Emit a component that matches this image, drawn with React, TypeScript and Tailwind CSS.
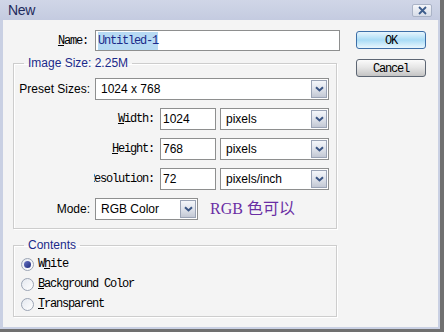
import React from "react";

const mono = "font-['Liberation_Mono',monospace] text-[12px] tracking-[-1.2px] text-black";
const sans = "font-['Liberation_Sans',Arial,sans-serif] text-[12px] text-black";

const Arrow = () => (
  <span className="flex h-[18px] w-[16px] items-center justify-center border border-[#9aa3b5] bg-gradient-to-b from-[#f4f6fa] via-[#dfe3eb] to-[#c3c8d4]">
    <svg width="9" height="6" viewBox="0 0 9 6">
      <path d="M1 1.2 L4.5 4.5 L8 1.2" stroke="#3a5584" strokeWidth="2" fill="none" />
    </svg>
  </span>
);

const Select = ({ value, className }: { value: string; className: string }) => (
  <div className={`flex h-[22px] items-center justify-between border border-[#8e8f8f] bg-white pl-[5px] pr-[1px] ${className}`}>
    <span className={sans}>{value}</span>
    <Arrow />
  </div>
);

const Field = ({ value }: { value: string }) => (
  <div className={`flex h-[22px] w-[56px] items-center border border-[#8e8f8f] bg-white pl-[2px] ${sans}`}>{value}</div>
);

const SizeRow = ({ label, value, unit, top }: { label: React.ReactNode; value: string; unit: string; top: string }) => (
  <div className={`flex items-center ${top}`}>
    <div className={`ml-[80px] flex w-[60px] justify-end overflow-hidden whitespace-nowrap ${mono}`}>{label}</div>
    <div className="ml-[6px]">
      <Field value={value} />
    </div>
    <Select value={unit} className="ml-[4px] w-[109px]" />
  </div>
);

const Radio = ({ checked, label }: { checked?: boolean; label: React.ReactNode }) => (
  <div className="flex h-[20px] items-center">
    <span className="ml-[7px] flex h-[13px] w-[13px] items-center justify-center rounded-full border border-[#9ba4b4] bg-gradient-to-br from-[#e4e8ef] to-[#ffffff]">
      {checked && <span className="h-[7px] w-[7px] rounded-full bg-gradient-to-br from-[#6a74c4] to-[#1e2a7c]" />}
    </span>
    <span className={`ml-[4px] ${mono}`}>{label}</span>
  </div>
);

const legend = "ml-[10px] px-[4px] font-['Liberation_Sans',Arial,sans-serif] text-[12px] leading-[14px] text-[#1b2a8a]";
const fieldset = "w-[324px] border border-[#cdcdcd] shadow-[1px_1px_0_#ffffff,inset_1px_1px_0_#ffffff]";

export default function App() {
  return (
    <div className="h-[332px] w-[444px] bg-[#707070] pb-[3px] pr-[4px]">
      <div className="flex h-full w-full flex-col border-b-2 border-l-[3px] border-r-2 border-[#c9d0e3] bg-[#f4f4f4]">
        <div className="-ml-[3px] -mr-[2px] flex h-[20px] shrink-0 items-center justify-between bg-gradient-to-b from-[#d0d6e7] to-[#c4cbe0] pl-[8px] pr-[8px]">
          <span className="font-['Liberation_Sans',Arial,sans-serif] text-[14px] tracking-[-0.3px] text-[#1f2a5c]">New</span>
          <span className="flex h-[13px] w-[20px] items-center justify-center rounded-[2px] border border-[#aab3c6] bg-gradient-to-b from-[#f4f6fa] to-[#d8dde8]">
            <svg width="9" height="9" viewBox="0 0 9 9">
              <path d="M1 1 L8 8 M8 1 L1 8" stroke="#3d5d8c" strokeWidth="1.8" />
            </svg>
          </span>
        </div>

        <div className="flex pl-[10px] pt-[10px]">
          <div className="flex w-[327px] flex-col">
            <div className="flex items-center">
              <div className={`w-[75px] text-right ${mono}`}>
                <span className="underline">N</span>ame:
              </div>
              <div className="ml-[7px] flex h-[21px] w-[245px] items-center border border-[#8e8f8f] bg-white pl-[2px]">
                <span className={`bg-[#b7daf3] ${mono}`} style={{ color: "#1b2a8a" }}>Untitled-1</span>
              </div>
            </div>

            <fieldset className={`mt-[5px] pb-[7px] ${fieldset}`}>
              <legend className={legend}>Image Size: 2.25M</legend>
              <div className="flex items-center pt-[8px]">
                <div className={`w-[76px] text-right ${sans}`}>Preset Sizes:</div>
                <Select value="1024 x 768" className="ml-[5px] w-[234px]" />
              </div>
              <SizeRow
                top="mt-[8px]"
                label={<span><span className="underline">W</span>idth:</span>}
                value="1024"
                unit="pixels"
              />
              <SizeRow
                top="mt-[8px]"
                label={<span><span className="underline">H</span>eight:</span>}
                value="768"
                unit="pixels"
              />
              <SizeRow top="mt-[8px]" label={<span>Resolution:</span>} value="72" unit="pixels/inch" />
              <div className="mt-[7px] flex items-center">
                <div className={`w-[76px] text-right ${sans}`}>Mode:</div>
                <Select value="RGB Color" className="ml-[5px] w-[103px]" />
                <span className="ml-[12px] font-['Liberation_Serif','Noto_Sans_CJK_SC',serif] text-[16px] text-[#6a2ea4]">RGB 色可以</span>
              </div>
            </fieldset>

            <fieldset className={`mt-[9px] pb-[2px] pt-[2px] ${fieldset}`}>
              <legend className={legend}>Contents</legend>
              <Radio checked label={<span>W<span className="underline">h</span>ite</span>} />
              <Radio label={<span><span className="underline">B</span>ackground Color</span>} />
              <Radio label={<span><span className="underline">T</span>ransparent</span>} />
            </fieldset>
          </div>

          <div className="ml-[16px] flex flex-col pt-[1px]">
            <button className={`h-[18px] w-[70px] rounded-[3px] border border-[#3d6fa8] bg-gradient-to-b from-[#e6f5fd] via-[#a9dcf6] to-[#e9f7fe] ${mono}`}>
              OK
            </button>
            <button className={`mt-[10px] h-[18px] w-[70px] rounded-[3px] border border-[#5d6673] bg-gradient-to-b from-[#fbfbfb] via-[#e4e4e4] to-[#c4c4c4] ${mono}`}>
              Cancel
            </button>
          </div>
        </div>
      </div>
    </div>
  );
}
